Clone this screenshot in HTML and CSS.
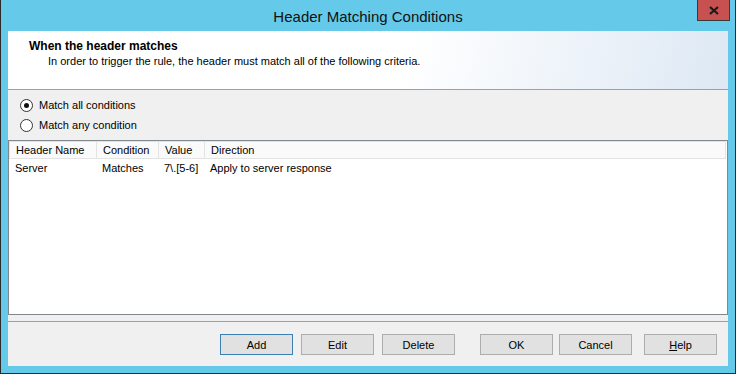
FILE: index.html
```html
<!DOCTYPE html>
<html lang="en">

<head>
    <meta charset="UTF-8">
    <title>Header Matching Conditions</title>
    <link rel="stylesheet" href="styles.css">
</head>

<body>
    <div class="window">
        <!-- Title bar -->
        <div class="titlebar">
            <span></span>
            <div class="title">Header Matching Conditions</div>
            <div class="close-btn">
                <svg width="10" height="9" viewBox="0 0 10 9">
                    <path d="M1 1 L9 8 M9 1 L1 8" stroke="#1a1a1a" stroke-width="2.2" fill="none" />
                </svg>
            </div>
        </div>

        <div class="client">
            <!-- Banner -->
            <div class="banner">
                <div class="banner-title">When the header matches</div>
                <div class="banner-text">In order to trigger the rule, the header must match all of the following criteria.</div>
            </div>

            <!-- Options -->
            <div class="options">
                <label class="radio-row"><span class="radio checked"></span>Match all conditions</label>
                <label class="radio-row"><span class="radio"></span>Match any condition</label>
            </div>

            <!-- Conditions list -->
            <div class="listview">
                <div class="list-header">
                    <div class="col col-name">Header Name</div>
                    <div class="col col-cond">Condition</div>
                    <div class="col col-value">Value</div>
                    <div class="col col-dir">Direction</div>
                </div>
                <div class="list-row">
                    <div class="col col-name">Server</div>
                    <div class="col col-cond">Matches</div>
                    <div class="col col-value">7\.[5-6]</div>
                    <div class="col col-dir">Apply to server response</div>
                </div>
            </div>

            <!-- Buttons -->
            <div class="button-bar">
                <button class="btn default">Add</button>
                <button class="btn gap-s">Edit</button>
                <button class="btn gap-s">Delete</button>
                <button class="btn gap-l">OK</button>
                <button class="btn gap-xs">Cancel</button>
                <button class="btn gap-m"><u>H</u>elp</button>
            </div>
        </div>
    </div>
</body>

</html>
```

FILE: styles.css
```css
body {
    margin: 0;
    font-family: 'Liberation Sans', Arial, sans-serif;
    font-size: 11px;
    color: #000;
}

.window {
    width: 736px;
    height: 374px;
    box-sizing: border-box;
    background-color: #65c9e9;
    border: 1px solid #2b2b2b;
    border-top: none;
    display: flex;
    flex-direction: column;
}

/* Title bar */
.titlebar {
    height: 31px;
    padding: 0 5px;
    display: grid;
    grid-template-columns: 1fr auto 1fr;
}

.title {
    font-size: 15px;
    line-height: 34px;
    color: #111;
}

.close-btn {
    justify-self: end;
    width: 31px;
    height: 20px;
    background-color: #c75050;
    border: 1px solid #3a3a3a;
    border-top: none;
    display: flex;
    align-items: center;
    justify-content: center;
}

/* Client area */
.client {
    flex: 1;
    margin: 0 7px 7px;
    background-color: #f0f0f0;
    display: flex;
    flex-direction: column;
}

.banner {
    height: 59px;
    box-sizing: border-box;
    padding: 8px 0 0 21px;
    border-bottom: 1px solid #a0a0a0;
    background: linear-gradient(105deg, #ffffff 55%, #dde8f4 100%);
    line-height: 15px;
}

.banner-title {
    font-weight: bold;
    font-size: 12px;
}

.banner-text {
    padding-left: 19px;
}

.options {
    height: 50px;
    box-sizing: border-box;
    padding: 5px 12px 0;
}

.radio-row {
    display: flex;
    align-items: center;
    height: 20px;
}

.radio {
    width: 11px;
    height: 11px;
    border: 1px solid #333;
    border-radius: 50%;
    background-color: #fff;
    margin-right: 6px;
    display: flex;
    align-items: center;
    justify-content: center;
}

.radio.checked::after {
    content: '';
    width: 5px;
    height: 5px;
    border-radius: 50%;
    background-color: #111;
}

/* List view */
.listview {
    height: 175px;
    box-sizing: border-box;
    border: 1px solid #828790;
    background-color: #fff;
}

.list-header {
    display: flex;
    height: 18px;
    box-sizing: border-box;
    margin-right: 1px;
    border: 1px solid #e3e3e3;
    background-color: #fafafa;
    line-height: 17px;
}

.list-header .col {
    border-right: 1px solid #e3e3e3;
}

.list-row {
    display: flex;
    height: 18px;
    line-height: 18px;
}

.col {
    box-sizing: border-box;
    padding-left: 6px;
    white-space: nowrap;
}

.col-name { width: 87px; }
.col-cond { width: 62px; }
.col-value { width: 46px; }
.col-dir { flex: 1; border-right: none !important; }

/* Buttons */
.button-bar {
    margin-top: 6px;
    border-top: 1px solid #a0a0a0;
    padding: 12px 11px 0 0;
    display: flex;
    justify-content: flex-end;
}

.btn {
    width: 73px;
    height: 21px;
    padding: 0;
    border: 1px solid #adadad;
    background-color: #e1e1e1;
    font-family: inherit;
    font-size: 11px;
    color: #000;
}

.btn.default {
    border-color: #3c7fb1;
}

.gap-xs { margin-left: 6px; }
.gap-s { margin-left: 8px; }
.gap-m { margin-left: 12px; }
.gap-l { margin-left: 25px; }
```
